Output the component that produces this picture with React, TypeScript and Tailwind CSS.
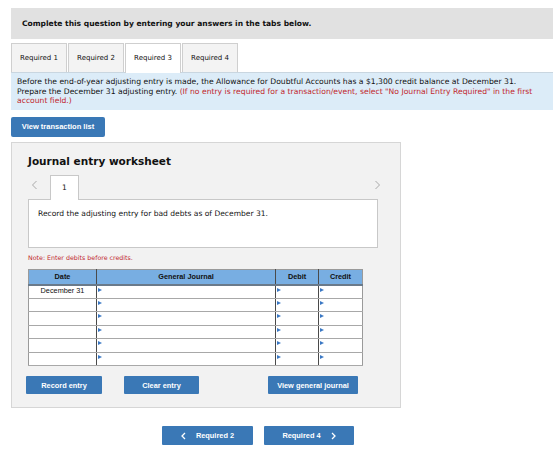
import React from "react";

const V = { fontFamily: '"DejaVu Sans", Verdana, sans-serif' };
const A = { fontFamily: '"Liberation Sans", Arial, sans-serif' };

function Tri() {
  return (
    <span className="absolute left-[1px] top-[2px] w-0 h-0 border-t-[2.5px] border-b-[2.5px] border-l-[4px] border-t-transparent border-b-transparent border-l-[#3b78c4]" />
  );
}

function Btn({ children, w }: { children: React.ReactNode; w: string }) {
  return (
    <div
      className={`${w} h-[18px] bg-[#3a78b6] rounded-[1px] flex items-center justify-center text-white font-bold text-[7.4px]`}
      style={A}
    >
      {children}
    </div>
  );
}

export default function App() {
  const rows = ["December 31", "", "", "", "", ""];
  return (
    <div className="w-[560px] h-[474px] bg-white pt-[8px] pl-[11px] text-[#111]">
      <div className="w-[542px] h-[31px] bg-[#e1e1e1] flex items-center pl-[11px] text-[7.55px] font-bold" style={V}>
        Complete this question by entering your answers in the tabs below.
      </div>
      <div className="mt-[4px] flex h-[29px] w-[542px] gap-[1px]" style={V}>
        {["Required 1", "Required 2", "Required 3", "Required 4"].map((t, i) => (
          <div
            key={t}
            className={`w-[56px] flex items-center justify-center text-[7px] border border-b-0 border-[#cfcfcf] ${i === 2 ? "bg-white h-[30px] relative z-10" : "bg-[#f3f3f3]"}`}
          >
            {t}
          </div>
        ))}
      </div>
      <div className="w-[542px] h-[38px] bg-[#dcecf8] border-t border-[#c9d6e0] pl-[6px] pr-[4px] pt-[4px] text-[7.65px] leading-[9.5px] whitespace-nowrap" style={V}>
        <div>Before the end-of-year adjusting entry is made, the Allowance for Doubtful Accounts has a $1,300 credit balance at December 31.</div>
        <div>
          <span>Prepare the December 31 adjusting entry. </span>
          <span className="text-[#c1272d]">(If no entry is required for a transaction/event, select "No Journal Entry Required" in the first</span>
        </div>
        <div className="text-[#c1272d]">account field.)</div>
      </div>
      <div className="mt-[7px] w-[94px] h-[20px] bg-[#3a78b6] rounded-[2px] flex items-center justify-center text-white font-bold text-[7.5px]" style={A}>
        View transaction list
      </div>
      <div className="mt-[5px] w-[390px] h-[266px] bg-[#f2f2f2] border border-[#d6d6d6] pl-[16px] pr-[22px]">
        <div className="mt-[11px] text-[10.5px] font-bold leading-[14px]" style={V}>
          Journal entry worksheet
        </div>
        <div className="mt-[7px] h-[24px] flex items-end relative">
          <svg className="absolute left-[3px] top-[5px]" width="7" height="10" viewBox="0 0 7 10">
            <path d="M5.5 1 L1.5 5 L5.5 9" stroke="#aaa" strokeWidth="1" fill="none" />
          </svg>
          <div className="ml-[22px] w-[29px] h-[25px] bg-white border border-b-0 border-[#c8c8c8] flex items-center justify-center text-[7.5px] relative top-[1px] z-10" style={V}>
            1
          </div>
          <svg className="absolute left-[346px] top-[5px]" width="7" height="10" viewBox="0 0 7 10">
            <path d="M1.5 1 L5.5 5 L1.5 9" stroke="#aaa" strokeWidth="1" fill="none" />
          </svg>
        </div>
        <div className="w-[350px] h-[49px] bg-white border border-[#c8c8c8] pl-[9px] pt-[8px] text-[7.55px]" style={V}>
          Record the adjusting entry for bad debts as of December 31.
        </div>
        <div className="mt-[5px] text-[6.3px] text-[#c1272d]" style={V}>
          Note: Enter debits before credits.
        </div>
        <table className="mt-[7px] w-[334px] border-collapse border border-[#9a9a9a] text-[7.3px] table-fixed" style={A}>
          <colgroup>
            <col className="w-[68px]" />
            <col className="w-[179px]" />
            <col className="w-[43px]" />
            <col className="w-[44px]" />
          </colgroup>
          <thead>
            <tr className="h-[15px] bg-[#78aee2] font-bold">
              <th className="border-b-2 border-r border-b-[#6a7a8a] border-r-[#4a4a4a] font-bold">Date</th>
              <th className="border-b-2 border-r border-b-[#6a7a8a] border-r-[#4a4a4a] font-bold">General Journal</th>
              <th className="border-b-2 border-r border-b-[#6a7a8a] border-r-[#4a4a4a] font-bold">Debit</th>
              <th className="border-b-2 border-b-[#6a7a8a] font-bold">Credit</th>
            </tr>
          </thead>
          <tbody>
            {rows.map((r, i) => (
              <tr key={i} className="h-[13.5px] bg-white">
                <td className="border-b border-r border-b-[#a8a8a8] border-r-[#4a4a4a] text-center align-middle">{r}</td>
                <td className="border-b border-r border-b-[#a8a8a8] border-r-[#4a4a4a] relative"><Tri /></td>
                <td className="border-b border-r border-b-[#a8a8a8] border-r-[#4a4a4a] relative"><Tri /></td>
                <td className="border-b border-b-[#a8a8a8] relative"><Tri /></td>
              </tr>
            ))}
          </tbody>
        </table>
        <div className="mt-[10px] flex">
          <div className="ml-[-2px]">
            <Btn w="w-[76px]">Record entry</Btn>
          </div>
          <div className="ml-[22px]">
            <Btn w="w-[75px]">Clear entry</Btn>
          </div>
          <div className="ml-[69px]">
            <Btn w="w-[90px]">View general journal</Btn>
          </div>
        </div>
      </div>
      <div className="mt-[18px] flex pl-[151px] gap-[11px]">
        <div className="w-[91px] h-[19px] bg-[#3a78b6] rounded-[1px] flex items-center justify-center text-white font-bold text-[7.4px]" style={A}>
          <svg className="mr-[10px]" width="5" height="8" viewBox="0 0 5 8">
            <path d="M4 1 L1 4 L4 7" stroke="white" strokeWidth="1.3" fill="none" />
          </svg>
          Required 2
        </div>
        <div className="w-[90px] h-[19px] bg-[#3a78b6] rounded-[1px] flex items-center justify-center text-white font-bold text-[7.4px]" style={A}>
          Required 4
          <svg className="ml-[10px]" width="5" height="8" viewBox="0 0 5 8">
            <path d="M1 1 L4 4 L1 7" stroke="white" strokeWidth="1.3" fill="none" />
          </svg>
        </div>
      </div>
    </div>
  );
}
